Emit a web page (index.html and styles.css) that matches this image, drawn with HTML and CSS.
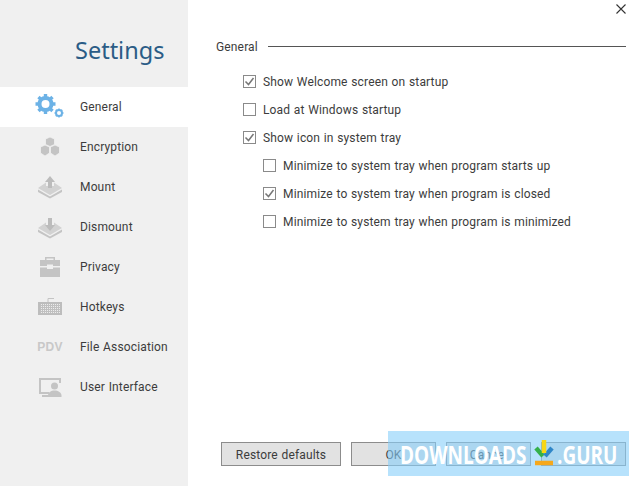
FILE: index.html
```html
<!DOCTYPE html>
<html lang="en">
<head>
<meta charset="utf-8">
<title>Settings</title>
<link rel="stylesheet" href="styles.css">
</head>
<body>
<div class="window">
  <aside class="sidebar">
    <h1 class="title">Settings</h1>
    <nav class="nav">
      <div class="nav-item active">
        <span class="nav-icon"><svg width="30" height="26" viewBox="0 0 30 26"><g fill="none" stroke="#6cb2e6"><circle cx="10.500" cy="10" r="6" stroke-width="4"/><path d="M10.500 0v20M.5 10h20M3.500 3l14 14M17.500 3l-14 14" stroke-width="3.4" stroke-dasharray="3.4 13.2"/><circle cx="24" cy="19" r="3" stroke-width="2"/><path d="M24 14.500v9M19.500 19h9M20.800 15.800l6.400 6.400M27.200 15.800l-6.400 6.400" stroke-width="1.500" stroke-dasharray="1.500 6"/></g></svg></span>
        <span>General</span>
      </div>
      <div class="nav-item">
        <span class="nav-icon"><svg width="30" height="26" viewBox="0 0 30 26"><g fill="#c4c4c4" stroke="#f0f0f0" stroke-width=".8"><path d="M15 3l4.500 2v5.500L15 12.500l-4.500-2V5z"/><path d="M10 11l4.500 2v6L10 22l-4.500-3v-6z"/><path d="M20 11l4.500 2v6L20 22l-4.500-3v-6z"/></g></svg></span>
        <span>Encryption</span>
      </div>
      <div class="nav-item">
        <span class="nav-icon"><svg width="30" height="26" viewBox="0 0 30 26"><path d="M3 14l8-5.500v3.500h8V8.500l8 5.500-12 7z" fill="#d2d2d2"/><path d="M3 15.500V18l12 6.500L27 18v-2.500l-12 7z" fill="#c4c4c4"/><path d="M15 2l5 6h-3v6h-4V8h-3z" fill="#bcbcbc"/></svg></span>
        <span>Mount</span>
      </div>
      <div class="nav-item">
        <span class="nav-icon"><svg width="30" height="26" viewBox="0 0 30 26"><path d="M3 14l8-5.500v3.500h8V8.500l8 5.500-12 7z" fill="#d2d2d2"/><path d="M3 15.500V18l12 6.500L27 18v-2.500l-12 7z" fill="#c4c4c4"/><path d="M15 17l-5-6h3V4h4v7h3z" fill="#bcbcbc"/></svg></span>
        <span>Dismount</span>
      </div>
      <div class="nav-item">
        <span class="nav-icon"><svg width="30" height="26" viewBox="0 0 30 26"><path d="M10 6V3h10v3h-1.500V4.500h-7V6z" fill="#c4c4c4"/><path d="M5 6h20v6h-7v-1.500h-6V12H5zM5 13.500h7V15h6v-1.500h7V23H5z" fill="#c4c4c4"/></svg></span>
        <span>Privacy</span>
      </div>
      <div class="nav-item">
        <span class="nav-icon"><svg width="30" height="26" viewBox="0 0 30 26"><defs><pattern id="keys" width="2" height="2" patternUnits="userSpaceOnUse"><rect width="2" height="2" fill="#c0c0c0"/><rect width="1" height="1" fill="#ececec"/></pattern></defs><path d="M13 8V4.500h6" fill="none" stroke="#c4c4c4"/><rect x="3" y="8" width="24" height="13" fill="#bdbdbd"/><rect x="5" y="10" width="20" height="9" fill="url(#keys)"/></svg></span>
        <span>Hotkeys</span>
      </div>
      <div class="nav-item">
        <span class="nav-icon nav-icon-text">PDV</span>
        <span>File Association</span>
      </div>
      <div class="nav-item">
        <span class="nav-icon"><svg width="30" height="26" viewBox="0 0 30 26"><path d="M20 5H5v14h9" fill="none" stroke="#c4c4c4" stroke-width="2"/><path d="M25 5v4" stroke="#c4c4c4" stroke-width="2"/><path d="M20 5h6" stroke="#c4c4c4" stroke-width="2"/><path d="M7 22h7" stroke="#c4c4c4" stroke-width="2"/><circle cx="19.500" cy="12" r="3.500" fill="#c4c4c4"/><path d="M13 23v-1.500c0-3 3-5 6.500-5s7 2 7 5V23z" fill="#c4c4c4"/></svg></span>
        <span>User Interface</span>
      </div>
    </nav>
  </aside>
  <main class="content">
    <div class="close-row"><svg width="10" height="10" viewBox="0 0 10 10"><path d="M.5.500l9 9M9.500.500l-9 9" stroke="#333" stroke-width="1.100" fill="none"/></svg></div>
    <div class="section-head"><span>General</span><span class="rule"></span></div>
    <div class="options">
      <label class="option"><span class="box"><svg class="tick" width="13" height="13" viewBox="0 0 13 13"><path d="M2.500 6.500l3 3 5-6.500" fill="none" stroke="#777" stroke-width="1.500"/></svg></span><span class="option-text">Show Welcome screen on startup</span></label>
      <label class="option"><span class="box"></span><span class="option-text">Load at Windows startup</span></label>
      <label class="option"><span class="box"><svg class="tick" width="13" height="13" viewBox="0 0 13 13"><path d="M2.500 6.500l3 3 5-6.500" fill="none" stroke="#777" stroke-width="1.500"/></svg></span><span class="option-text">Show icon in system tray</span></label>
      <label class="option sub"><span class="box"></span><span class="option-text">Minimize to system tray when program starts up</span></label>
      <label class="option sub"><span class="box"><svg class="tick" width="13" height="13" viewBox="0 0 13 13"><path d="M2.500 6.500l3 3 5-6.500" fill="none" stroke="#777" stroke-width="1.500"/></svg></span><span class="option-text">Minimize to system tray when program is closed</span></label>
      <label class="option sub"><span class="box"></span><span class="option-text">Minimize to system tray when program is minimized</span></label>
    </div>
    <div class="buttons">
      <button class="btn btn-wide">Restore defaults</button>
      <button class="btn">OK</button>
      <button class="btn">Cancel</button>
      <button class="btn"></button>
    </div>
  </main>
  <div class="watermark">
    <span class="wm-word wm-main">DOWNLOADS</span>
    <svg width="20" height="27" viewBox="0 0 20 27"><path d="M2 8l7 8" stroke="#35b04a" stroke-width="4.500" fill="none"/><path d="M18 8l-7 8" stroke="#2f86c8" stroke-width="4.500" fill="none"/><path d="M10 0v13" stroke="#f7d616" stroke-width="4.500" fill="none"/><path d="M1 23h18" stroke="#f5a81c" stroke-width="4.500" fill="none"/></svg>
    <span class="wm-word wm-tld">.GURU</span>
  </div>
</div>
</body>
</html>
```
FILE: styles.css
```css
* { box-sizing: border-box; }
html, body { margin: 0; padding: 0; background: #fff; }
.window {
  position: relative;
  display: flex;
  width: 639px;
  height: 486px;
  overflow: hidden;
  font-family: Roboto, sans-serif;
  font-size: 12px;
  letter-spacing: 0.15px;
  word-spacing: 0.5px;
  color: #3c3c3c;
}
.sidebar { width: 188px; flex: none; background: #f0f0f0; }
.title {
  margin: 0;
  height: 87px;
  padding: 33px 0 0 75px;
  font-family: "Noto Sans", sans-serif;
  font-size: 23.5px;
  font-weight: 400;
  line-height: 34px;
  letter-spacing: 0;
  color: #2b5c86;
}
.nav { display: flex; flex-direction: column; }
.nav-item { display: flex; align-items: center; height: 40px; padding-left: 35px; gap: 15px; }
.nav-item.active { background: #fff; }
.nav-icon { display: flex; align-items: center; justify-content: center; width: 30px; height: 26px; }
.nav-icon-text { font-family: "Liberation Sans", sans-serif; font-size: 12px; font-weight: 700; letter-spacing: 0.3px; color: #c8c8c8; }
.content { flex: 1; padding: 0 13px 0 28px; display: flex; flex-direction: column; }
.close-row { display: flex; justify-content: flex-end; height: 38px; padding: 4px 0 0; }
.section-head { display: flex; align-items: center; gap: 10px; height: 17px; }
.rule { flex: 1; height: 1px; background: #555; }
.options { display: flex; flex-direction: column; margin-top: 12px; padding-left: 27px; }
.option { display: flex; align-items: center; height: 28px; gap: 7px; }
.option.sub { padding-left: 20px; }
.option-text { padding-top: 2px; }
.box { display: flex; width: 13px; height: 13px; border: 1px solid #8a8a8a; background: #fff; flex: none; }
.tick { margin: -1px; flex: none; }
.buttons { display: flex; gap: 10px; margin-top: auto; margin-bottom: 20px; padding-left: 5px; }
.btn {
  width: 85px;
  height: 24px;
  border: 1px solid #8c8c8c;
  background: #e2e2e2;
  font: inherit;
  letter-spacing: inherit;
  word-spacing: inherit;
  color: #3c3c3c;
  padding: 2px 0 0;
}
.btn-wide { width: 120px; }
.watermark {
  position: absolute;
  left: 388px;
  top: 431px;
  width: 241px;
  height: 45px;
  display: flex;
  align-items: center;
  padding-left: 12px;
  gap: 3px;
  background: rgba(135, 206, 250, 0.6);
  color: #fff;
  font-family: "Open Sans", sans-serif;
  font-size: 25px;
  font-weight: 700;
  letter-spacing: 0;
}
.wm-word { display: block; white-space: nowrap; transform: scaleX(0.76); transform-origin: left center; }
.wm-main { width: 131px; }
.wm-tld { width: 60px; }
```
